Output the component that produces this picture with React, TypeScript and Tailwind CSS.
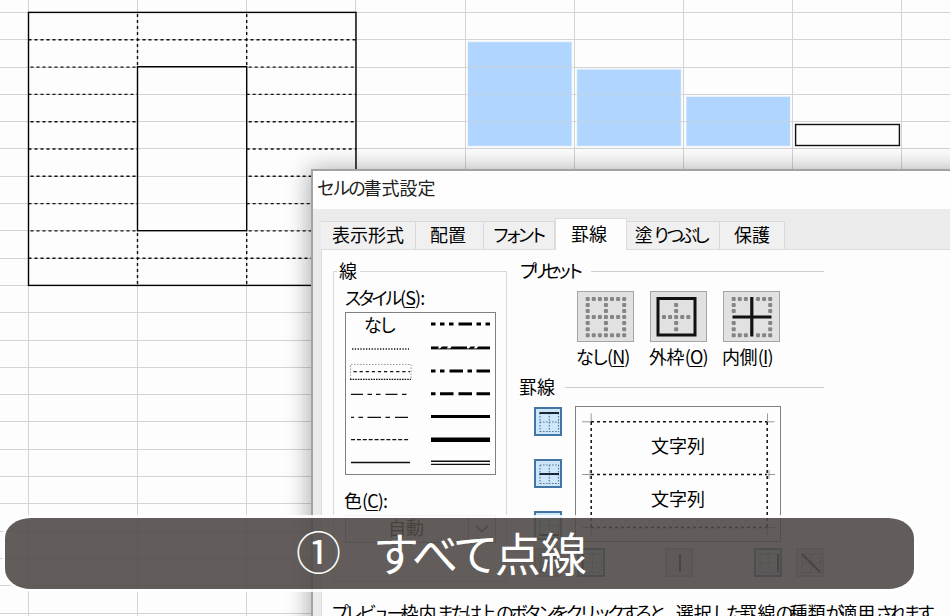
import React from "react";

const COLS = 10;
const ROWS = 24;

/* Splits Japanese text so kana can be set proportionally tighter than kanji. */
function Ja({ text, kana = "tracking-[-2px]" }: { text: string; kana?: string }) {
  const runs = text.match(/[\u3040-\u30ff\u3001\u3002]+|[^\u3040-\u30ff\u3001\u3002]+/g) ?? [];
  return (
    <>
      {runs.map((run, i) => (
        <span key={i} className={/[\u3040-\u30ff\u3001\u3002]/.test(run) ? kana : ""}>
          {run}
        </span>
      ))}
    </>
  );
}

function Key({ letter }: { letter: string }) {
  return (
    <span className="tracking-[-0.9px]">
      (<span className="underline decoration-1 underline-offset-2">{letter}</span>)
    </span>
  );
}

function Sheet() {
  return (
    <div className="grid w-[1011px] grid-cols-[29px_repeat(9,109.15px)] grid-rows-[13px_repeat(23,27.3px)]">
      {Array.from({ length: COLS * ROWS }, (_, i) => (
        <div key={i} className="border-r border-b border-[#d3d3d3]" />
      ))}
    </div>
  );
}

function SheetMarks() {
  const xs = [28.5, 137.5, 246.7, 356];
  const y = (r: number) => 12.5 + r * 27.3;
  const dash = { stroke: "#111", strokeWidth: 1.4, strokeDasharray: "3 3" };
  const solid = { stroke: "#000", strokeWidth: 1.4, fill: "none" };
  return (
    <svg className="absolute top-0 left-0" width="950" height="300">
      {[1, 9].map((r) => (
        <line key={r} x1={xs[0]} x2={xs[3]} y1={y(r)} y2={y(r)} {...dash} />
      ))}
      {[2, 3, 4, 5, 6, 7, 8].map((r) => (
        <g key={r}>
          <line x1={xs[0] + (r % 2 ? 0 : 2)} x2={xs[1]} y1={y(r)} y2={y(r)} {...dash} />
          <line x1={xs[2] + (r % 2 ? 0 : 2)} x2={xs[3]} y1={y(r)} y2={y(r)} {...dash} />
        </g>
      ))}
      {[xs[1], xs[2]].map((x) => (
        <g key={x}>
          <line x1={x} x2={x} y1={14} y2={y(2)} {...dash} />
          <line x1={x} x2={x} y1={y(8) + 2} y2={y(10)} {...dash} />
        </g>
      ))}
      <rect x={xs[0]} y={12.4} width={327.5} height={273} {...solid} />
      <rect x={xs[1]} y={66.7} width={109.2} height={164} {...solid} />
      {[
        [467.5, 41.7, 104.5],
        [576.8, 69, 77.2],
        [686, 96.3, 49.9],
      ].map(([x, t, h]) => (
        <g key={x}>
          <rect x={x} y={t} width={104.5} height={h} fill="#b0d5fe" stroke="#f1f6fb" strokeWidth="1" />
          {[67, 94.4, 121.7].filter((l) => l > t + 5).map((l) => (
            <line key={l} x1={x} x2={x + 104.5} y1={l} y2={l} stroke="#c2d3e4" strokeWidth="1.3" />
          ))}
        </g>
      ))}
      <rect x={795.6} y={124.5} width={103.8} height={21} fill="#fdfdfd" stroke="#111" strokeWidth="1.4" />
    </svg>
  );
}

function StyleLines() {
  const thin = { stroke: "#111", strokeWidth: 1.3 };
  const thick = { stroke: "#000", strokeWidth: 3 };
  return (
    <svg width="149" height="161" viewBox="346 313 149 161">
      <line x1="352" x2="409" y1="349" y2="349" {...thin} strokeDasharray="1.3 1.5" />
      <path d="M350.5 379V364.5H411V379" fill="none" stroke="#999" strokeDasharray="1.5 1.5" />
      <line x1="350" x2="411" y1="379.3" y2="379.3" {...thin} strokeDasharray="1.6 1" />
      <line x1="353.5" x2="410" y1="371.7" y2="371.7" {...thin} strokeDasharray="3.2 2.9" />
      <line x1="351" x2="409" y1="394.4" y2="394.4" {...thin} strokeDasharray="12 4.5 4.5 4 4.5 5" />
      <line x1="351" x2="408" y1="417.3" y2="417.3" {...thin} strokeDasharray="3 4.5 4.5 4.5 13.5 4.5 4.5 5 13 0" />
      <line x1="351" x2="409" y1="439.7" y2="439.7" {...thin} strokeDasharray="4 1.9" />
      <line x1="351" x2="410" y1="462.5" y2="462.5" {...thin} />
      <line x1="431" x2="490" y1="324" y2="324" {...thick} strokeDasharray="4.5 4.5 4.5 4.5 4.5 5 13.5 4.5" />
      <path d="M431 349h6.500l1.500-2.600h-8zM439.500 349h7l1.500-2.600h-6zM450 349h17v-2.600h-15.500zM468.500 349h5l1.500-2.600h-4.500zM476.500 349H490v-2.600h-12z" />
      <path d="M431 348.900h59" stroke="#111" strokeWidth="1" />
      <line x1="431" x2="490" y1="371" y2="371" {...thick} strokeDasharray="4.5 4.5 4.5 5 13.5 4.5 4.5 4.5 14 0" />
      <line x1="431" x2="490" y1="393.8" y2="393.8" {...thick} strokeDasharray="4.5 4.5 13.5 5 13.5 4.5 14 0" />
      <line x1="431" x2="490" y1="416.5" y2="416.5" {...thick} />
      <line x1="431" x2="490" y1="439.8" y2="439.8" stroke="#000" strokeWidth="4.5" />
      <path d="M431 461.2h59M431 464.4h59" stroke="#111" strokeWidth="1.4" />
    </svg>
  );
}

type PresetKind = "none" | "outer" | "inner";

function PresetIcon({ kind }: { kind: PresetKind }) {
  const n = [0, 1, 2, 3, 4, 5, 6];
  const left = kind === "outer" ? 4.9 : 7.7;
  const dots: React.ReactNode[] = [];
  for (const r of n)
    for (const c of n) {
      const edge = r === 0 || r === 6 || c === 0 || c === 6;
      const mid = r === 3 || c === 3;
      if ((edge && kind !== "outer" && !(mid && kind === "inner")) || (!edge && mid && kind !== "inner"))
        dots.push(
          <rect key={`${r}-${c}`} x={left + c * 6.08} y={4.9 + r * 6.05} width="4" height="4" rx="1" fill="#858585" />
        );
    }
  return (
    <svg width="55" height="49">
      {dots}
      {kind === "outer" && <rect x="7" y="6.5" width="37" height="36.5" fill="none" stroke="#111" strokeWidth="3" />}
      {kind === "inner" && <path d="M27.8 5v39.500M8.500 25h39" stroke="#111" strokeWidth="3.2" />}
    </svg>
  );
}

function Preset({ kind, name, letter }: { kind: PresetKind; name: string; letter: string }) {
  return (
    <div className="flex w-[57px] flex-col">
      <div className="h-[51px] w-[57px] border border-[#a5a5a5] bg-[#e1e1e1]">
        <PresetIcon kind={kind} />
      </div>
      <div className="mt-[4px] -ml-px text-[18px] leading-[20px] tracking-[-0.6px] whitespace-nowrap">
        <Ja text={name} kana="tracking-[-3px]" />
        <span className="ml-px"><Key letter={letter} /></span>
      </div>
    </div>
  );
}

function EdgeButton({ line, on = true, grid = true }: { line: string; on?: boolean; grid?: boolean }) {
  return (
    <div
      className={
        on
          ? "h-[29px] w-[28px] shrink-0 border-2 border-[#4275a3] bg-[#cce6fb]"
          : "h-[29px] w-[28px] shrink-0 border-2 border-[#bdbdbd] bg-[#dedede]"
      }
    >
      <svg className="-m-px" width="26" height="27">
        {grid && (
          <path
            d="M5 5h19M5 23.500h19M5 14h19M5 5v19M14.300 5v19M23.500 5v19"
            fill="none"
            stroke="#5f7896"
            strokeWidth="1.2"
            strokeDasharray="1.6 1.4"
          />
        )}
        <path d={line} stroke="#0b1420" strokeWidth="1.8" />
      </svg>
    </div>
  );
}

function Preview() {
  return (
    <div className="relative h-[136px] w-[206px] border-[1.4px] border-[#808080] bg-[#fdfdfd]">
      <svg className="absolute -top-px -left-px" width="206" height="136">
        <path
          d="M16.2 7.5v9M7 15.8h9M192.5 7.5v8.5M192.5 15.8h7M7 68.5h9M15 64v9M192.5 68.5h7.5M194 64v9M7 121.5h9M16.2 121v8M192 121.5h8M192.2 121v8"
          fill="none"
          stroke="#999"
        />
        <path
          d="M16 15.8h176M16 68.5h176M16 121.5h176M16.2 16v106M192.2 16v106"
          fill="none"
          stroke="#111"
          strokeWidth="1.5"
          strokeDasharray="3 3"
        />
      </svg>
      <div className="flex h-full flex-col items-center pt-[28px] text-[18px] leading-[20px]">
        <span>文字列</span>
        <span className="mt-[33px]">文字列</span>
      </div>
    </div>
  );
}

const TABS = [
  { text: "表示形式", cls: "w-[95px]", kana: "" },
  { text: "配置", cls: "w-[68px] pr-[3px]", kana: "" },
  { text: "フォント", cls: "w-[71px] pr-[4px]", kana: "tracking-[-5.500px]" },
  { text: "罫線", cls: "w-[72px] pr-[4px]", kana: "", active: true },
  { text: "塗りつぶし", cls: "w-[93px] pr-[5px]", kana: "tracking-[-4.700px]" },
  { text: "保護", cls: "w-[65px]", kana: "" },
];

function LineGroup() {
  return (
    <div className="mt-[21px] ml-[11px] h-[311px] w-[174px] shrink-0 border border-[#d8d8d8]">
      <div className="-mt-[12px] ml-[3px] w-[23px] bg-[#fdfdfd] pl-[2px] text-[18px] leading-[20px]">線</div>
      <div className="mt-[7px] ml-[10px] text-[18px] leading-[20px]">
        <Ja text="スタイル" kana="tracking-[-4.5px]" />
        <span className="ml-0.5"><Key letter="S" />:</span>
      </div>
      <div className="relative mt-[5px] ml-[11px] h-[163px] w-[151px] border-[1.4px] border-[#808080]">
        <StyleLines />
        <span className="absolute top-0 left-[18px] text-[18px] leading-[22px] tracking-[-3px]">なし</span>
      </div>
      <div className="mt-[15px] ml-[10px] text-[18px] leading-[20px]">
        色<Key letter="C" />:
      </div>
      <div className="mt-[5px] ml-[11px] flex h-[28px] w-[151px] border border-[#9a9a9a] bg-[#f0f0f0]">
        <div className="flex-1 pl-[42px] text-[18px] leading-[23px]">自動</div>
        <div className="flex w-[27px] items-center justify-center border-l border-[#9a9a9a]">
          <svg width="14" height="10">
            <path d="M1.5 2l5.5 5.5L12.500 2" fill="none" stroke="#444" strokeWidth="1.6" />
          </svg>
        </div>
      </div>
    </div>
  );
}

function Heading({ children, line }: { children: React.ReactNode; line: string }) {
  return (
    <div className="flex h-[20px] w-[304px] items-center justify-between text-[18px] leading-[20px]">
      <span className="-mt-[2px] -ml-px whitespace-nowrap">{children}</span>
      <span className={line} />
    </div>
  );
}

function Dialog() {
  return (
    <div className="absolute top-[169px] left-[311px] h-[600px] w-[760px] border-2 border-[#a3a3a3] bg-[#ebebeb] shadow-[0_2px_22px_2px_rgba(0,0,0,0.33)]">
      <div className="h-[38px] bg-[#fefefe] pt-[5px] pl-[4px] text-[18px] leading-[22px] text-[#222]">
        <Ja text="セルの書式設定" kana="tracking-[-2.500px]" />
      </div>
      <div className="flex h-[40px] items-end pl-[8px]">
        {TABS.map((t) => (
          <div
            key={t.text}
            className={`${t.cls} ${
              t.active
                ? "z-10 -mb-px h-[32px] border-x border-t border-[#dcdcdc] bg-[#fdfdfd] pt-[4px]"
                : "h-[28px] border-t border-r border-[#d9d9d9] bg-[#f0f0f0] pt-[2px]"
            } text-center text-[18px] leading-[20px] whitespace-nowrap`}
          >
            <Ja text={t.text} kana={t.kana} />
          </div>
        ))}
      </div>
      <div className="ml-[8px] flex h-[500px] flex-col border-t border-l border-[#dcdcdc] bg-[#fdfdfd]">
        <div className="flex h-[350px]">
          <LineGroup />
          <div className="ml-[13px] flex flex-col pt-[11px]">
            <Heading line="w-[233px] border-t border-[#cfcfcf]">
              <Ja text="プリセット" kana="tracking-[-6.200px]" />
            </Heading>
            <div className="mt-[10px] ml-[57px] flex gap-[16px]">
              <Preset kind="none" name="なし" letter="N" />
              <Preset kind="outer" name="外枠" letter="O" />
              <Preset kind="inner" name="内側" letter="I" />
            </div>
            <div className="mt-[11px]">
              <Heading line="w-[259px] border-t border-[#cfcfcf]">罫線</Heading>
            </div>
            <div className="mt-[9px] ml-[14px] flex h-[136px]">
              <div className="mt-px flex flex-col gap-[23px]">
                <EdgeButton line="M4.500 5h19.500" />
                <EdgeButton line="M4.500 14h19.500" />
                <EdgeButton line="M4.500 23h19.500" />
              </div>
              <div className="ml-[13px]">
                <Preview />
              </div>
            </div>
            <div className="mt-[6px] ml-[14px] flex">
              <EdgeButton on={false} line="M5 22L22 5" />
              <div className="ml-[15px]"><EdgeButton line="M4.500 5v18" /></div>
              <div className="ml-[60px]"><EdgeButton on={false} grid={false} line="M14 5v18" /></div>
              <div className="ml-[61px]"><EdgeButton line="M23 5v18" /></div>
              <div className="ml-[14px]"><EdgeButton on={false} line="M5 5l18 18" /></div>
            </div>
          </div>
        </div>
        <div className="ml-[9px] text-[18px] leading-[24px] whitespace-nowrap">
          <Ja
            text="プレビュー枠内または上のボタンをクリックすると、選択した罫線の種類が適用されます。"
            kana="tracking-[-4.120px]"
          />
        </div>
      </div>
    </div>
  );
}

export default function App() {
  return (
    <div className="relative h-[616px] w-[950px] overflow-hidden bg-[#fdfdfd] font-['Noto_Sans_CJK_JP',sans-serif] text-black">
      <Sheet />
      <SheetMarks />
      <Dialog />
      <div className="absolute top-[518px] left-[5px] z-20 flex h-[71px] w-[909px] items-center rounded-[26px/20px] bg-[#4f4946]/89 pb-[5px] pl-[291px] text-[46px] leading-[60px] whitespace-pre text-white shadow-[0_0_0_3px_rgba(254,254,254,0.9)]">
        <span className="w-[77px] text-[45px]">①</span>
        <Ja text="すべて点線" kana="tracking-[-3.700px]" />
      </div>
    </div>
  );
}
